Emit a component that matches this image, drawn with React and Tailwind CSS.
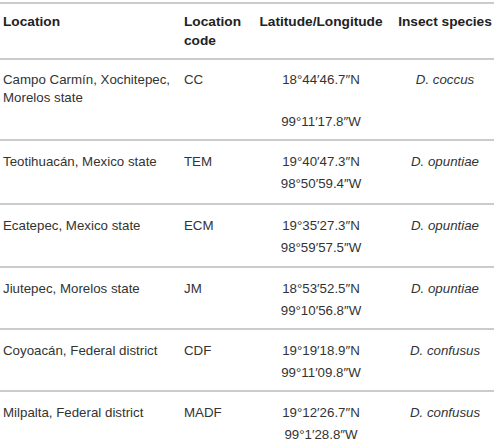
import React from "react";

const rows = [
  { loc: ["Campo Carmín, Xochitepec,", "Morelos state"], code: "CC", n: "18°44′46.7″N", w: "99°11′17.8″W", sp: "D. coccus", h: "h-[81px]", pt: "pt-[11px]", gap: true },
  { loc: ["Teotihuacán, Mexico state"], code: "TEM", n: "19°40′47.3″N", w: "98°50′59.4″W", sp: "D. opuntiae", h: "h-[64px]", pt: "pt-[12px]" },
  { loc: ["Ecatepec, Mexico state"], code: "ECM", n: "19°35′27.3″N", w: "98°59′57.5″W", sp: "D. opuntiae", h: "h-[63px]", pt: "pt-[12px]" },
  { loc: ["Jiutepec, Morelos state"], code: "JM", n: "18°53′52.5″N", w: "99°10′56.8″W", sp: "D. opuntiae", h: "h-[62px]", pt: "pt-[12px]" },
  { loc: ["Coyoacán, Federal district"], code: "CDF", n: "19°19′18.9″N", w: "99°11′09.8″W", sp: "D. confusus", h: "h-[62px]", pt: "pt-[12px]" },
  { loc: ["Milpalta, Federal district"], code: "MADF", n: "19°12′26.7″N", w: "99°1′28.8″W", sp: "D. confusus", h: "h-[51px]", pt: "pt-[12px]" },
];

export default function App() {
  return (
    <div className="w-[494px] h-[441px] overflow-hidden bg-white pt-[2px] text-[#333] font-['Liberation_Sans',Arial,sans-serif]">
      <div className="border-t-2 border-[#cbcbcb] h-[56px] grid grid-cols-[181px_73px_142px_98px] pt-[8px] text-[13.7px] leading-[19px] font-bold text-[#222]">
        <div className="pl-[3px]">Location</div>
        <div className="pl-[3px]">Location<br />code</div>
        <div className="text-center pr-[8px]">Latitude/Longitude</div>
        <div className="text-center">Insect species</div>
      </div>
      {rows.map((r, i) => (
        <div key={i} className={`border-t-2 border-[#cbcbcb] ${r.h} ${r.pt} grid grid-cols-[181px_73px_142px_98px] text-[13.3px] leading-[18px]`}>
          <div className="pl-[3px]">
            {r.loc.map((l, j) => (
              <div key={j}>{l}</div>
            ))}
          </div>
          <div className="pl-[3px]">{r.code}</div>
          <div className="text-center pr-[8px]">
            <div>{r.n}</div>
            <div className={r.gap ? "mt-[24px]" : "mt-[4px]"}>{r.w}</div>
          </div>
          <div className="text-center italic">{r.sp}</div>
        </div>
      ))}
    </div>
  );
}
